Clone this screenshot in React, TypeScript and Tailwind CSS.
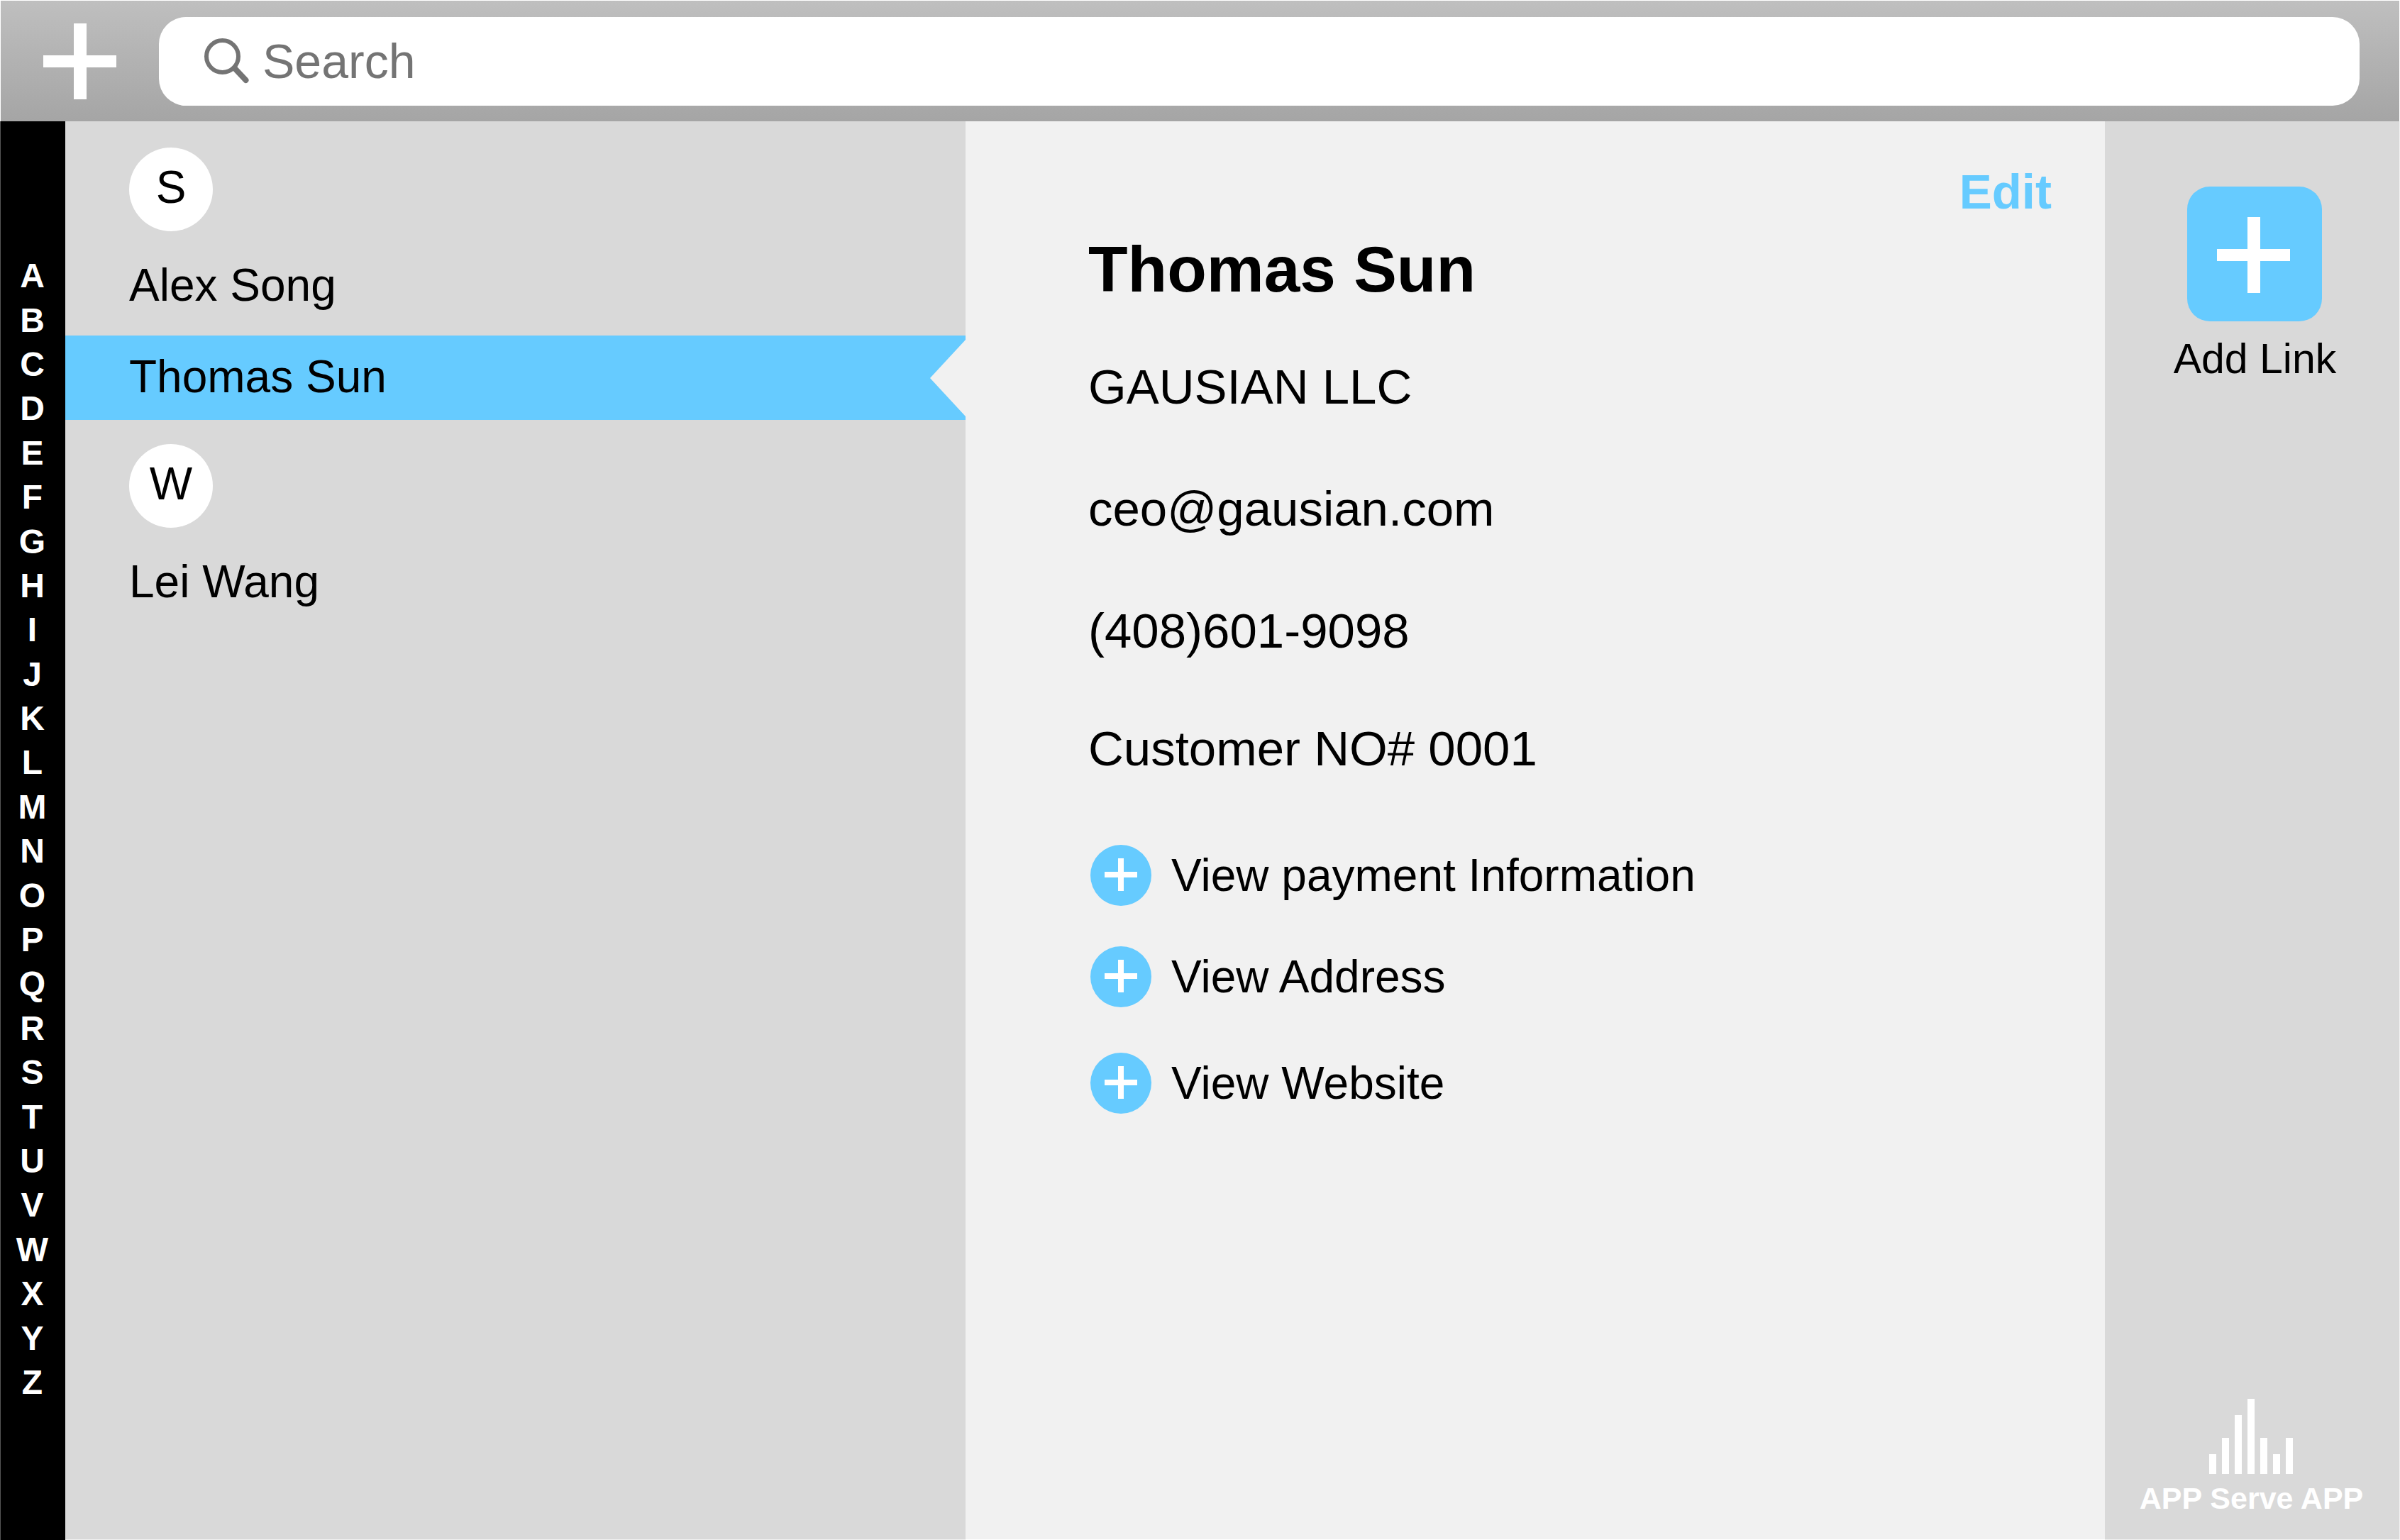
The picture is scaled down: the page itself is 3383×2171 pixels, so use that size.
import React from "react";

const LETTERS = "ABCDEFGHIJKLMNOPQRSTUVWXYZ".split("");

const GROUPS = [
  { letter: "S", contacts: ["Alex Song", "Thomas Sun"] },
  { letter: "W", contacts: ["Lei Wang"] },
];

const SELECTED = "Thomas Sun";

const LOGO_BARS = [28, 51, 83, 106, 51, 28, 51];

function PlusLarge() {
  return (
    <svg className="h-[107px] w-[103px]" viewBox="0 0 103 107" fill="white" aria-hidden="true">
      <rect x="43" y="0" width="18" height="107" />
      <rect x="0" y="45" width="103" height="17" />
    </svg>
  );
}

function PlusCircle() {
  return (
    <svg className="size-[86px] shrink-0" viewBox="0 0 86 86" aria-hidden="true">
      <circle cx="43" cy="43" r="43" fill="#66cbff" />
      <rect x="39" y="19" width="8" height="46" fill="white" />
      <rect x="20" y="38" width="46" height="8" fill="white" />
    </svg>
  );
}

function SearchIcon() {
  return (
    <svg className="size-[64px] shrink-0" viewBox="0 0 64 64" fill="none" stroke="#747474" aria-hidden="true">
      <circle cx="25.5" cy="25.5" r="22.5" strokeWidth="6" />
      <path d="M43 42.5 L58.5 59" strokeWidth="8" strokeLinecap="round" />
    </svg>
  );
}

function LogoBars() {
  return (
    <svg className="h-[106px] w-[118px]" viewBox="0 0 118 106" fill="white" aria-hidden="true">
      {LOGO_BARS.map((h, i) => (
        <rect key={i} x={i * 18} y={106 - h} width="10" height={h} />
      ))}
    </svg>
  );
}

function Header() {
  return (
    <header className="flex h-[171px] items-center gap-[60px] border-x border-t border-white bg-linear-to-b from-[#bfbfbf] to-[#a5a5a5] pr-[56px] pl-[60px]">
      <button type="button" aria-label="Add contact" className="shrink-0">
        <PlusLarge />
      </button>
      <label className="flex h-[125px] min-w-0 flex-1 items-center gap-[18px] rounded-[38px] bg-white pr-10 pl-16">
        <SearchIcon />
        <input
          type="search"
          aria-label="Search"
          placeholder="Search"
          className="min-w-0 flex-1 bg-transparent text-[68px] leading-[80px] text-[#747474] outline-none placeholder:text-[#747474]"
        />
      </label>
    </header>
  );
}

function LetterIndex() {
  return (
    <nav
      aria-label="Alphabet"
      className="flex flex-col border-l border-[#555555] bg-black pt-[187px] pr-[2px] pb-[191px] text-[48px] leading-[56px] font-bold text-white"
    >
      {LETTERS.map((l) => (
        <a key={l} href={`#${l}`} className="flex flex-1 items-center justify-center">
          {l}
        </a>
      ))}
    </nav>
  );
}

function ContactRow({ name, selected }: { name: string; selected: boolean }) {
  return (
    <li>
      <button
        type="button"
        aria-pressed={selected}
        className={`relative flex h-[119px] w-full items-center pb-1 pl-[90px] text-left ${selected ? "bg-[#66cbff]" : ""}`}
      >
        {name}
        {selected && (
          <svg className="absolute top-[6px] right-0 h-[108px] w-[50px]" viewBox="0 0 50 108" aria-hidden="true">
            <path d="M50 0 L0 54 L50 108 Z" fill="#f1f1f1" />
          </svg>
        )}
      </button>
    </li>
  );
}

function ContactList() {
  return (
    <section
      aria-label="Contacts"
      className="flex flex-col gap-[34px] border-b border-[#f1f1f1] bg-[#d9d9d9] pt-[37px] text-[64px] leading-[76px]"
    >
      {GROUPS.map((g) => (
        <div key={g.letter} id={g.letter}>
          <h2 className="ml-[90px] flex size-[118px] items-center justify-center rounded-full bg-white pb-[6px]">
            {g.letter}
          </h2>
          <ul className="mt-[18px] flex flex-col gap-[10px]">
            {g.contacts.map((c) => (
              <ContactRow key={c} name={c} selected={c === SELECTED} />
            ))}
          </ul>
        </div>
      ))}
    </section>
  );
}

function ViewButton({ className = "", children }: { className?: string; children: React.ReactNode }) {
  return (
    <button
      type="button"
      className={`flex items-center gap-[28px] self-start text-[64px] leading-[76px] ${className}`}
    >
      <PlusCircle />
      {children}
    </button>
  );
}

function Details() {
  return (
    <main className="flex flex-col border-b border-white bg-[#f1f1f1] pt-[60px] pr-[75px] pl-[173px] text-[69px] leading-[80px]">
      <button type="button" className="self-end font-bold text-[#66cbff]">
        Edit
      </button>
      <h1 className="mt-[19px] text-[91px] leading-[100px] font-bold">Thomas Sun</h1>
      <p className="mt-[76px]">GAUSIAN LLC</p>
      <p className="mt-[92px]">ceo@gausian.com</p>
      <p className="mt-[92px]">(408)601-9098</p>
      <p className="mt-[86px]">Customer NO# 0001</p>
      <div className="mt-[95px] ml-[3px] flex flex-col">
        <ViewButton>View payment Information</ViewButton>
        <ViewButton className="mt-[57px]">View Address</ViewButton>
        <ViewButton className="mt-[64px]">View Website</ViewButton>
      </div>
    </main>
  );
}

function LinkPanel() {
  return (
    <aside className="flex flex-col items-center justify-between border-r border-b border-[#f1f1f1] bg-[#d9d9d9] pt-[92px] pr-[2px] pb-[34px]">
      <button type="button" className="ml-[10px] flex flex-col items-center gap-[17px] text-[59px] leading-[72px]">
        <span className="flex size-[190px] items-center justify-center rounded-[32px] bg-[#66cbff] pt-[3px] pr-[3px]">
          <PlusLarge />
        </span>
        Add Link
      </button>
      <div className="flex flex-col items-center gap-[10px] text-[43px] leading-[48px] font-bold text-white">
        <LogoBars />
        APP Serve APP
      </div>
    </aside>
  );
}

export default function App() {
  return (
    <div className="flex min-h-screen flex-col font-['Liberation_Sans',Arial,sans-serif] text-black">
      <Header />
      <div className="grid flex-1 grid-cols-[92px_1269fr_1606fr_416px]">
        <LetterIndex />
        <ContactList />
        <Details />
        <LinkPanel />
      </div>
    </div>
  );
}
